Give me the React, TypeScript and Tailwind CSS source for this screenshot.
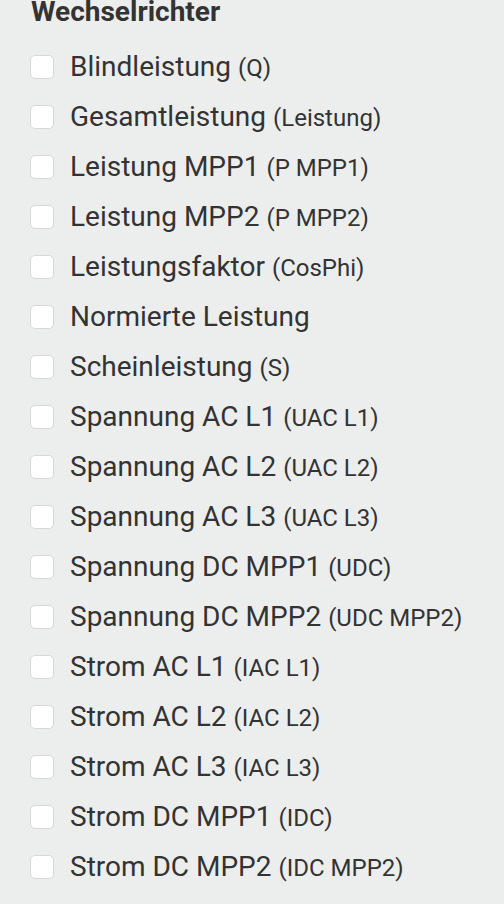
import React from "react";

const items: [string, string][] = [
  ["Blindleistung", "(Q)"],
  ["Gesamtleistung", "(Leistung)"],
  ["Leistung MPP1", "(P MPP1)"],
  ["Leistung MPP2", "(P MPP2)"],
  ["Leistungsfaktor", "(CosPhi)"],
  ["Normierte Leistung", ""],
  ["Scheinleistung", "(S)"],
  ["Spannung AC L1", "(UAC L1)"],
  ["Spannung AC L2", "(UAC L2)"],
  ["Spannung AC L3", "(UAC L3)"],
  ["Spannung DC MPP1", "(UDC)"],
  ["Spannung DC MPP2", "(UDC MPP2)"],
  ["Strom AC L1", "(IAC L1)"],
  ["Strom AC L2", "(IAC L2)"],
  ["Strom AC L3", "(IAC L3)"],
  ["Strom DC MPP1", "(IDC)"],
  ["Strom DC MPP2", "(IDC MPP2)"],
];

export default function App() {
  return (
    <div
      className="w-[504px] h-[904px] overflow-hidden bg-[#eceeed] text-[#333333] pl-[30px]"
      style={{ fontFamily: "Roboto, 'Noto Sans', sans-serif" }}
    >
      <h2 className="h-[42px] text-[28px] font-bold leading-[24px] pl-[1px]">
        Wechselrichter
      </h2>
      <ul className="flex flex-col">
        {items.map(([label, abbr]) => (
          <li key={label} className="h-[50px] flex items-center">
            <span className="w-[24px] h-[24px] shrink-0 rounded-[5px] bg-white border border-[#d6d8d7]" />
            <span className="ml-[16px] text-[28px] leading-[32px] whitespace-nowrap">
              {label}
              {abbr && <span className="text-[24px] ml-[7px]">{abbr}</span>}
            </span>
          </li>
        ))}
      </ul>
    </div>
  );
}
